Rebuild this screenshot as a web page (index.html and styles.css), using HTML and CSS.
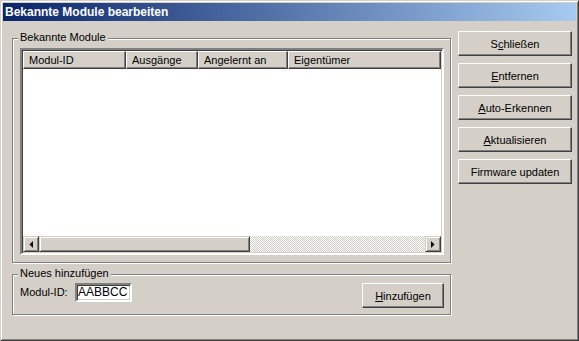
FILE: index.html
```html
<!DOCTYPE html>
<html lang="de">
<head>
    <meta charset="UTF-8">
    <title>Bekannte Module bearbeiten</title>
    <link rel="stylesheet" href="styles.css">
</head>
<body>
    <div class="window">
        <div class="titlebar">Bekannte Module bearbeiten</div>
        <div class="main">
            <div class="left">
                <div class="group known">
                    <span class="caption">Bekannte Module</span>
                    <div class="listview">
                        <div class="header">
                            <div class="col c1">Modul-ID</div>
                            <div class="col c2">Ausgänge</div>
                            <div class="col c3">Angelernt an</div>
                            <div class="col c4">Eigentümer</div>
                        </div>
                        <div class="rows"></div>
                        <div class="hscroll">
                            <div class="sbtn">
                                <svg width="4" height="7" viewBox="0 0 4 7"><polygon points="4,0 4,7 0.5,3.5" fill="#000"/></svg>
                            </div>
                            <div class="thumb"></div>
                            <div class="track"></div>
                            <div class="sbtn">
                                <svg width="4" height="7" viewBox="0 0 4 7"><polygon points="0,0 0,7 3.5,3.5" fill="#000"/></svg>
                            </div>
                        </div>
                    </div>
                </div>
                <div class="group add">
                    <span class="caption">Neues hinzufügen</span>
                    <div class="addrow">
                        <label class="lbl">Modul-ID:</label>
                        <div class="input">AABBCC</div>
                        <button class="btn btn-add"><u>H</u>inzufügen</button>
                    </div>
                </div>
            </div>
            <div class="right">
                <button class="btn">S<u>c</u>hließen</button>
                <button class="btn"><u>E</u>ntfernen</button>
                <button class="btn"><u>A</u>uto-Erkennen</button>
                <button class="btn"><u>A</u>ktualisieren</button>
                <button class="btn">Firmware updaten</button>
            </div>
        </div>
    </div>
</body>
</html>
```

FILE: styles.css
```css
* {
    box-sizing: border-box;
}
body {
    margin: 0;
    background: #d4d0c8;
    font-family: "Liberation Sans", Arial, sans-serif;
    font-size: 11px;
    color: #000;
}
.window {
    width: 579px;
    height: 341px;
    background: #d4d0c8;
    border: 1px solid;
    border-color: #d4d0c8 #404040 #404040 #d4d0c8;
    box-shadow: inset 1px 1px #fff, inset -1px -1px #808080;
    padding: 2px;
    display: flex;
    flex-direction: column;
}
.titlebar {
    height: 18px;
    line-height: 18px;
    padding-left: 2px;
    color: #fff;
    font-size: 12px;
    font-weight: bold;
    background: linear-gradient(to right, #0a246a, #a6caf0);
}
.main {
    display: flex;
    padding: 0 4px 0 9px;
    margin-top: 1px;
}
.left {
    width: 439px;
    display: flex;
    flex-direction: column;
}
.right {
    width: 114px;
    margin-left: 7px;
    padding-top: 9px;
    display: flex;
    flex-direction: column;
    gap: 7px;
}
.group {
    border: 1px solid #808080;
    box-shadow: 1px 1px 0 #fff, inset 1px 1px 0 #fff;
    padding: 0 6px 0 7px;
    display: flex;
    flex-direction: column;
}
.known {
    margin-top: 16px;
    height: 225px;
}
.add {
    margin-top: 11px;
    height: 41px;
}
.caption {
    align-self: flex-start;
    margin: -8px 0 0 -2px;
    padding: 0 2px;
    height: 13px;
    line-height: 13px;
    background: #d4d0c8;
}
.listview {
    margin-top: 4px;
    height: 207px;
    border: 2px solid;
    border-color: #808080 #fff #fff #808080;
    box-shadow: inset 1px 1px #404040, inset -1px -1px #d4d0c8;
    padding: 1px;
    background: #fff;
    display: flex;
    flex-direction: column;
}
.header {
    display: flex;
    height: 18px;
    background: #d4d0c8;
}
.col {
    border: 1px solid;
    border-color: #fff #404040 #404040 #fff;
    box-shadow: inset -1px -1px #808080;
    padding-left: 5px;
    line-height: 16px;
    white-space: nowrap;
}
.c1 { width: 103px; }
.c2 { width: 72px; }
.c3 { width: 90px; }
.c4 { flex: 1; }
.rows {
    flex: 1;
    background: #fff;
}
.hscroll {
    height: 16px;
    display: flex;
}
.sbtn, .thumb {
    background: #d4d0c8;
    border: 1px solid;
    border-color: #d4d0c8 #404040 #404040 #d4d0c8;
    box-shadow: inset 1px 1px #fff, inset -1px -1px #808080;
}
.sbtn {
    width: 16px;
    display: flex;
    align-items: center;
    justify-content: center;
}
.thumb {
    width: 211px;
}
.track {
    flex: 1;
    background: repeating-conic-gradient(#fff 0 25%, #d4d0c8 0 50%) 0 0 / 2px 2px;
}
.addrow {
    display: flex;
    align-items: flex-start;
    margin-top: 3px;
}
.lbl {
    margin-top: 3px;
    width: 55px;
}
.input {
    width: 57px;
    height: 19px;
    border: 2px solid;
    border-color: #808080 #fff #fff #808080;
    box-shadow: inset 1px 1px #404040, inset -1px -1px #d4d0c8;
    background: #fff;
    font-size: 12px;
    line-height: 15px;
    padding-left: 1px;
}
.btn {
    height: 25px;
    padding: 0;
    font-family: "Liberation Sans", Arial, sans-serif;
    font-size: 11px;
    color: #000;
    background: #d4d0c8;
    border: 1px solid;
    border-color: #fff #404040 #404040 #fff;
    box-shadow: inset -1px -1px #808080;
}
.btn-add {
    width: 82px;
    margin-left: auto;
}
```
